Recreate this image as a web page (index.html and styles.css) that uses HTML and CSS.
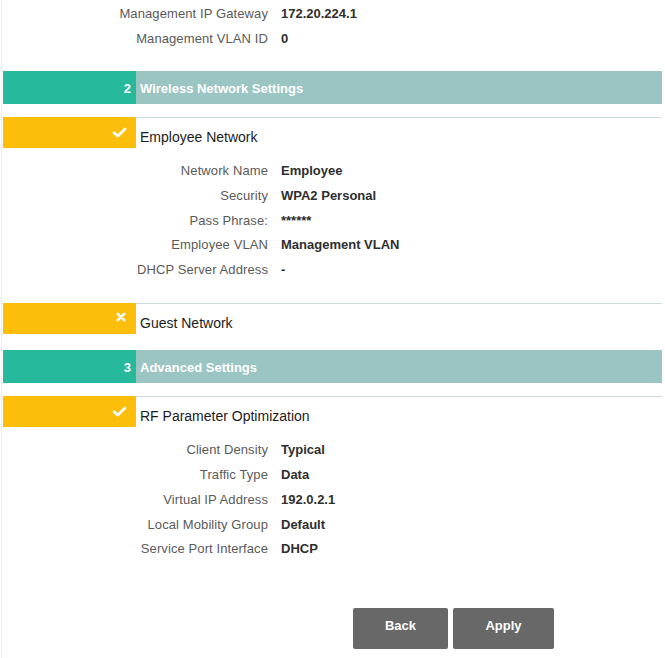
FILE: index.html
```html
<!DOCTYPE html>
<html lang="en">
<head>
  <meta charset="UTF-8">
  <title>Setup Summary</title>
  <link rel="stylesheet" href="styles.css">
</head>
<body>

<div class="wizard">
  <dl class="fields fields-top">
    <dt>Management IP Gateway</dt><dd>172.20.224.1</dd>
    <dt>Management VLAN ID</dt><dd>0</dd>
  </dl>

  <!-- Paso 2 -->
  <section class="step">
    <div class="step-head">
      <span class="step-num">2</span>
      <span class="step-title">Wireless Network Settings</span>
    </div>

    <div class="sub">
      <div class="sub-head">
        <span class="sub-icon">
          <svg width="15" height="11" viewBox="0 0 15 11"><path d="M2 5.8 L5.8 9 L13 2" fill="none" stroke="#fff" stroke-width="2.8" stroke-linecap="round" stroke-linejoin="round"/></svg>
        </span>
        <span class="sub-title">Employee Network</span>
      </div>
      <dl class="fields">
        <dt>Network Name</dt><dd>Employee</dd>
        <dt>Security</dt><dd>WPA2 Personal</dd>
        <dt>Pass Phrase:</dt><dd>******</dd>
        <dt>Employee VLAN</dt><dd>Management VLAN</dd>
        <dt>DHCP Server Address</dt><dd>-</dd>
      </dl>
    </div>

    <div class="sub">
      <div class="sub-head">
        <span class="sub-icon icon-x">
          <svg width="10" height="10" viewBox="0 0 10 10"><path d="M1.8 1.8 L8.2 8.2 M8.2 1.8 L1.8 8.2" fill="none" stroke="#fff" stroke-width="2.6" stroke-linecap="round"/></svg>
        </span>
        <span class="sub-title">Guest Network</span>
      </div>
    </div>
  </section>

  <!-- Paso 3 -->
  <section class="step">
    <div class="step-head">
      <span class="step-num">3</span>
      <span class="step-title">Advanced Settings</span>
    </div>

    <div class="sub">
      <div class="sub-head">
        <span class="sub-icon">
          <svg width="15" height="11" viewBox="0 0 15 11"><path d="M2 5.8 L5.8 9 L13 2" fill="none" stroke="#fff" stroke-width="2.8" stroke-linecap="round" stroke-linejoin="round"/></svg>
        </span>
        <span class="sub-title">RF Parameter Optimization</span>
      </div>
      <dl class="fields">
        <dt>Client Density</dt><dd>Typical</dd>
        <dt>Traffic Type</dt><dd>Data</dd>
        <dt>Virtual IP Address</dt><dd>192.0.2.1</dd>
        <dt>Local Mobility Group</dt><dd>Default</dd>
        <dt>Service Port Interface</dt><dd>DHCP</dd>
      </dl>
    </div>
  </section>

  <div class="actions">
    <button class="btn btn-back">Back</button>
    <button class="btn btn-apply">Apply</button>
  </div>
</div>

</body>
</html>
```

FILE: styles.css
```css
:root {
  --color-teal: #26b99b;
  --color-teal-light: #9bc5c3;
  --color-yellow: #fcbd0b;
  --color-line: #c8dad9;
  --color-label: #5a5a5a;
  --color-value: #2e2e2e;
  --color-button: #686868;
}

body {
  margin: 0;
  background-color: #fff;
  font-family: "Liberation Sans", Arial, sans-serif;
  font-size: 13px;
}

.wizard {
  margin-left: 1px;
  border-left: 1px solid #ececec;
  padding: 0 3px 0 1px;
  min-height: 658px;
  box-sizing: border-box;
}

/* Filas de datos */
.fields {
  display: grid;
  grid-template-columns: 265px 1fr;
  column-gap: 13px;
  margin: 0;
  padding: 11px 0 20px;
  line-height: 24.75px;
}

.fields-top {
  padding: 2px 0 0;
}

.fields dt {
  text-align: right;
  color: var(--color-label);
  letter-spacing: 0.1px;
  white-space: nowrap;
}

.fields dd {
  margin: 0;
  color: var(--color-value);
  font-weight: bold;
}

/* Encabezado de paso */
.step {
  margin-top: 16.5px;
}

.fields-top + .step {
  margin-top: 19.5px;
}

.step-head {
  display: flex;
  height: 33px;
  box-sizing: border-box;
  padding-top: 2px;
  line-height: 31px;
  background-color: var(--color-teal-light);
  color: #fff;
  font-weight: bold;
}

.step-num {
  width: 133px;
  flex-shrink: 0;
  box-sizing: border-box;
  margin-top: -2px;
  padding: 2px 5px 0 0;
  text-align: right;
  background-color: var(--color-teal);
}

.step-title {
  padding-left: 4px;
}

/* Subsección */
.sub {
  margin-top: 13px;
}

.sub + .sub {
  margin-top: 0;
}

.sub-head {
  display: flex;
  height: 31px;
}

.sub-icon {
  width: 133px;
  flex-shrink: 0;
  box-sizing: border-box;
  padding-right: 9px;
  display: flex;
  align-items: center;
  justify-content: flex-end;
  background-color: var(--color-yellow);
}

.sub-icon svg {
  display: block;
}

.icon-x {
  padding-right: 10px;
  padding-bottom: 2px;
}

.sub-title {
  flex: 1;
  border-top: 1px solid var(--color-line);
  padding: 12px 0 0 4px;
  line-height: 15px;
  font-size: 14px;
  color: #1c1c1c;
}

/* Botones */
.actions {
  display: flex;
  gap: 5px;
  margin-top: 25.5px;
  padding-left: 350px;
}

.btn {
  height: 41px;
  padding: 0 0 5px;
  border: none;
  border-radius: 2px;
  background-color: var(--color-button);
  color: #fff;
  font-family: inherit;
  font-size: 13px;
  font-weight: bold;
  cursor: pointer;
}

.btn-back {
  width: 95px;
}

.btn-apply {
  width: 101px;
}

.btn:hover {
  background-color: #575757;
}
```
